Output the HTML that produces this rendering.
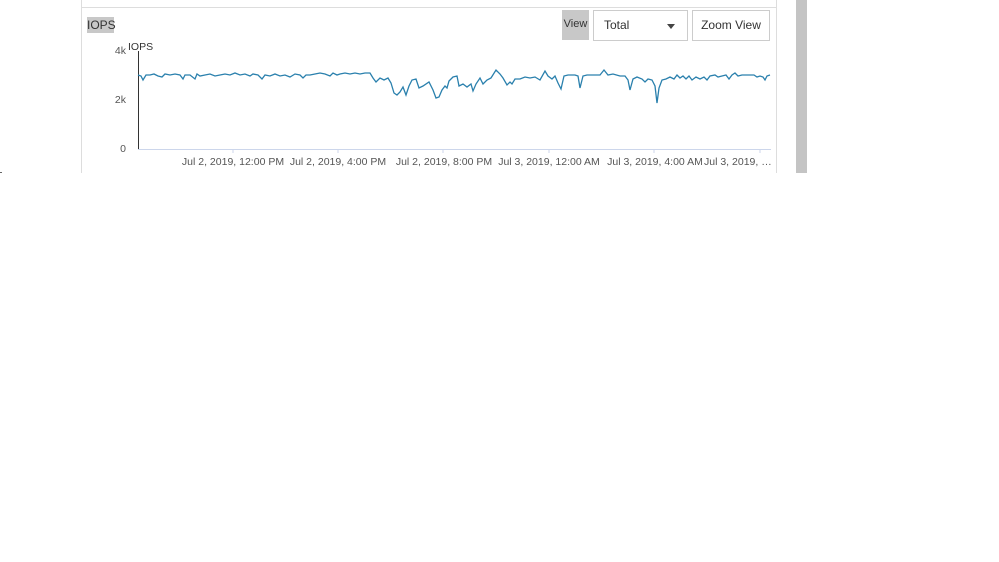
<!DOCTYPE html>
<html><head><meta charset="utf-8"><style>
body{margin:0;width:999px;height:562px;background:#fff;position:relative;overflow:hidden;font-family:"Liberation Sans",sans-serif;}
.abs{position:absolute}
</style></head><body>
<div class="abs" style="left:81px;top:0;width:1px;height:173px;background:#ddd"></div>
<div class="abs" style="left:776px;top:0;width:1px;height:173px;background:#ddd"></div>
<div class="abs" style="left:81px;top:7px;width:696px;height:1px;background:#ddd"></div>
<div class="abs" style="left:796px;top:0;width:11px;height:173px;background:#c4c4c4"></div>
<div class="abs" style="left:0;top:172px;width:2px;height:1px;background:#666"></div>
<div class="abs" style="left:87px;top:17px;width:27px;height:16px;background:#c8c8c8;font-size:12px;color:#333;line-height:16px;text-align:center">IOPS</div>
<div class="abs" style="left:562px;top:10px;width:27px;height:30px;background:#c8c8c8;font-size:11px;color:#333;line-height:28px;text-align:center">View</div>
<div class="abs" style="left:593px;top:10px;width:93px;height:29px;border:1px solid #ccc;font-size:12px;color:#333;line-height:29px;box-sizing:content-box"><span style="margin-left:10px">Total</span><span style="position:absolute;left:73px;top:13px;border-left:4px solid transparent;border-right:4px solid transparent;border-top:5px solid #444"></span></div>
<div class="abs" style="left:692px;top:10px;width:76px;height:29px;border:1px solid #ccc;font-size:12px;color:#333;line-height:29px;text-align:center">Zoom View</div>
<svg class="abs" style="left:0;top:0" width="999" height="200">
<line x1="138" y1="149.5" x2="771" y2="149.5" stroke="#ccd6eb"/>
<line x1="138.5" y1="51" x2="138.5" y2="149" stroke="#333"/>
<g stroke="#ccd6eb"><line x1="233" y1="149" x2="233" y2="153"/><line x1="338" y1="149" x2="338" y2="153"/><line x1="443" y1="149" x2="443" y2="153"/><line x1="549" y1="149" x2="549" y2="153"/><line x1="654" y1="149" x2="654" y2="153"/><line x1="760" y1="149" x2="760" y2="153"/></g>
<g font-size="10.5" fill="#555" font-family="Liberation Sans,sans-serif">
<text x="126" y="54" text-anchor="end">4k</text><text x="126" y="103" text-anchor="end">2k</text><text x="126" y="152" text-anchor="end">0</text>
<text x="128" y="50" fill="#333">IOPS</text>
<text x="233" y="165" text-anchor="middle">Jul 2, 2019, 12:00 PM</text>
<text x="338" y="165" text-anchor="middle">Jul 2, 2019, 4:00 PM</text>
<text x="444" y="165" text-anchor="middle">Jul 2, 2019, 8:00 PM</text>
<text x="549" y="165" text-anchor="middle">Jul 3, 2019, 12:00 AM</text>
<text x="655" y="165" text-anchor="middle">Jul 3, 2019, 4:00 AM</text>
<text x="704" y="165">Jul 3, 2019, …</text>
</g>
<polyline fill="none" stroke="#2a80ad" stroke-width="1.3" points="138,75 141,76 143,80 146,75 150,75 154,74 158,76 162,77 165,74 170,75 175,74 180,75 183,79 185,75 190,75 195,79 197,74 200,76 205,75 210,74 215,76 220,75 225,74 230,75 235,73 240,75 245,74 250,76 253,74 258,75 262,79 265,75 270,76 275,74 280,76 285,75 290,77 295,74 300,75 303,78 306,75 310,75 315,74 320,73 325,74 330,76 333,73 337,75 340,74 345,73 350,74 355,73 360,74 365,73 370,73 373,78 376,82 380,78 384,80 388,78 391,83 394,93 397,95 400,92 403,87 406,95 409,86 412,80 416,79 419,88 423,86 429,82 433,90 436,98 439,97 442,90 445,86 447,88 449,81 453,77 457,76 459,86 463,84 467,87 471,84 473,91 476,84 480,78 483,84 487,80 491,78 496,70 500,74 503,78 507,85 510,82 512,84 515,79 520,79 525,77 530,78 535,77 540,80 545,71 548,76 552,79 555,76 558,83 561,89 564,76 568,75 575,75 578,76 580,88 583,76 587,75 593,75 600,75 604,70 608,75 613,74 620,76 625,76 628,80 630,90 633,79 637,77 642,79 645,82 648,79 652,80 655,86 657,103 659,88 662,80 666,79 670,77 674,79 677,75 680,78 683,76 686,79 689,76 692,80 696,77 700,79 704,77 707,80 710,76 715,75 718,77 722,76 726,75 729,79 732,75 735,73 738,76 742,75 746,75 750,75 754,75 757,77 760,76 763,77 765,80 767,76 770,75"/>
</svg>
</body></html>
